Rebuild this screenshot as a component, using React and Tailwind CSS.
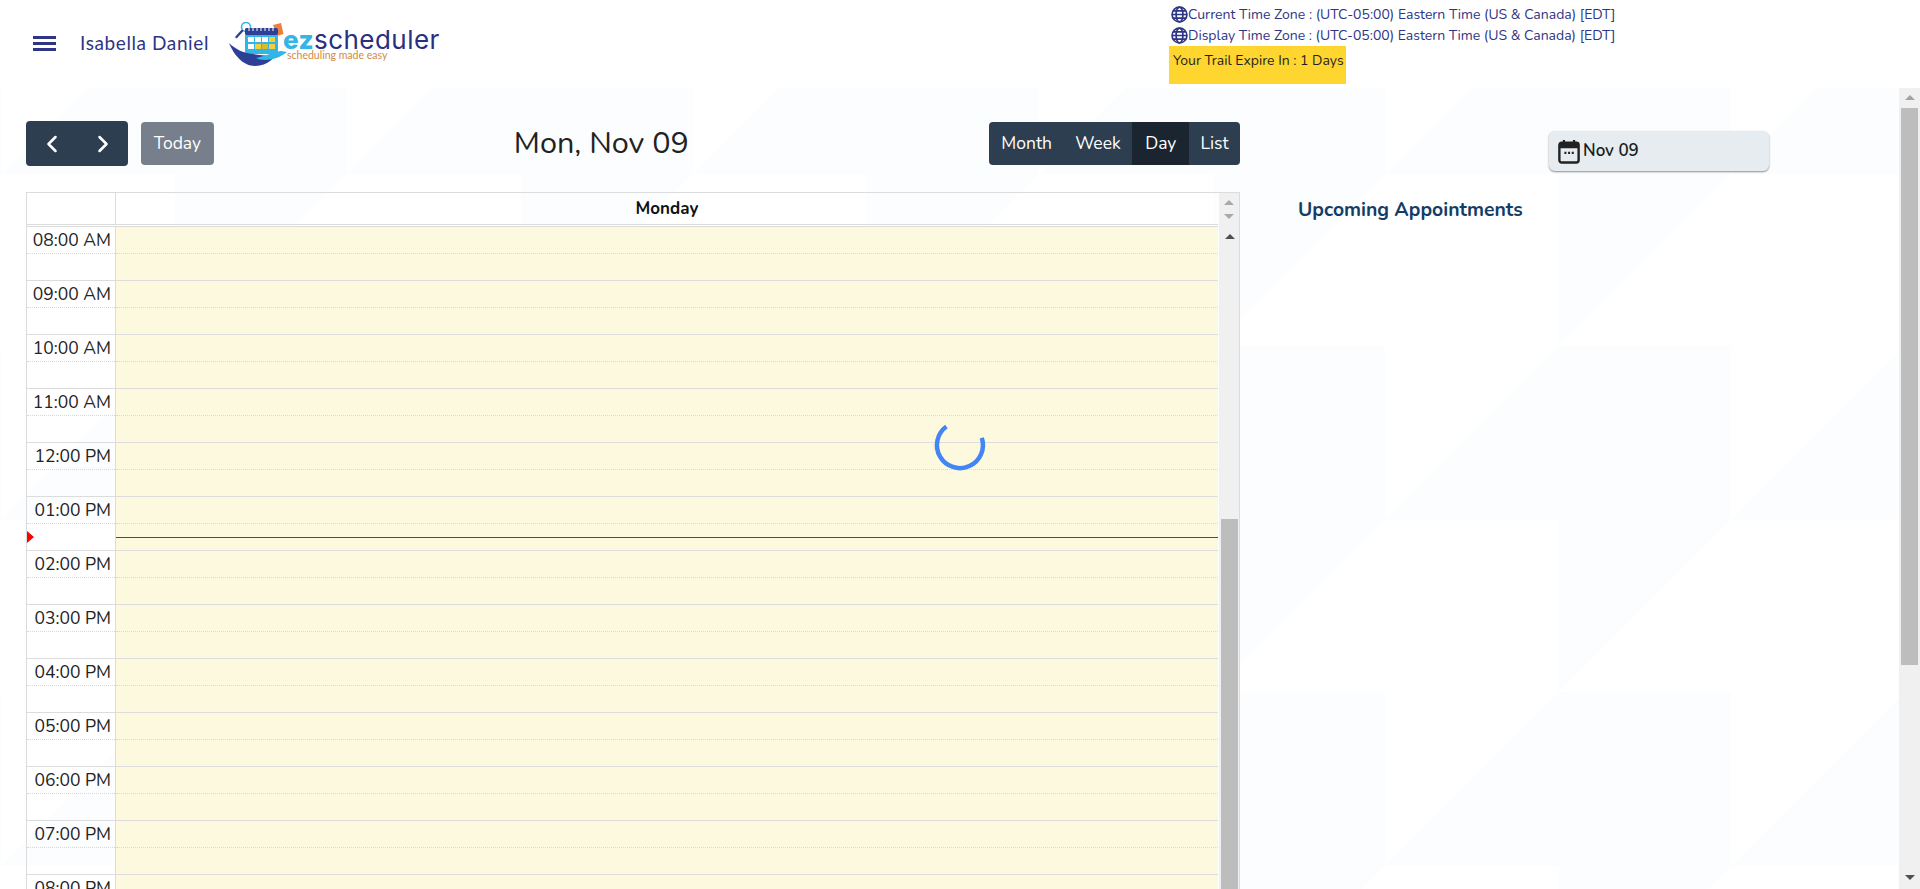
import React from "react";
import { ChevronLeft, ChevronRight } from "lucide-react";

const hours = ["08:00 AM","09:00 AM","10:00 AM","11:00 AM","12:00 PM","01:00 PM","02:00 PM","03:00 PM","04:00 PM","05:00 PM","06:00 PM","07:00 PM","08:00 PM"];
const font = "font-['Nunito','Lato','Noto_Sans',sans-serif]";

function Globe() {
  return (
    <svg width="17" height="17" viewBox="0 0 24 24" fill="none" stroke="#2e3585" strokeWidth="2.4" className="shrink-0 ml-[2px] -mt-[1px]">
      <circle cx="12" cy="12" r="10.5" />
      <ellipse cx="12" cy="12" rx="4.8" ry="10.5" />
      <path d="M1.5 12h21M3 6.8h18M3 17.2h18" />
    </svg>
  );
}

function Logo() {
  return (
    <div className="relative w-[212px] h-[44px] ml-[20px] mt-[22px] shrink-0">
      <svg width="60" height="44" viewBox="0 0 60 44" className="absolute left-0 top-0">
        <circle cx="17" cy="5" r="4.5" fill="#fff" stroke="#35b6e6" strokeWidth="1.6" />
        <path d="M13 9 L7.500 15" stroke="#2e3f96" strokeWidth="2.400" strokeLinecap="round" />
        <path d="M44 3 L52 1 L54.500 12 L48 14Z" fill="#ef7d3c" />
        <rect x="16" y="6" width="33" height="26" rx="2" fill="#33b5e5" />
        <rect x="16" y="6" width="33" height="7" rx="2" fill="#2e3f96" />
        <path d="M20 5v4M24 5v4M28 5v4M32 5v4M36 5v4M40 5v4M44 5v4" stroke="#fff" strokeWidth="1" />
        <rect x="19" y="15" width="6" height="5" fill="#fff" />
        <rect x="26" y="15" width="6" height="5" fill="#fff" />
        <rect x="33" y="15" width="6" height="5" fill="#fff" />
        <rect x="40" y="15" width="6" height="5" fill="#f2cf3c" />
        <rect x="19" y="22" width="6" height="5" fill="#fff" />
        <rect x="26" y="22" width="6" height="5" fill="#f2cf3c" />
        <rect x="33" y="22" width="6" height="5" fill="#d9b92e" />
        <rect x="40" y="22" width="6" height="5" fill="#f2cf3c" />
        <path d="M0 21 C6 27 14 31 24 32 C32 33 38 34 46 34 C42 40 34 44 26 44 C14 44 5 33 0 21Z" fill="#2e3f96" />
        <path d="M27 36 C36 34 44 30 52 29 L58 30 C52 35 44 38 36 38 C32 38 29 37 27 36Z" fill="#33b5e5" />
      </svg>
      <div className="absolute left-[54px] top-[7px] font-['Inter',sans-serif] text-[26px] leading-[22px] tracking-[0.45px] text-[#2a2f7f] whitespace-nowrap">
        <span className="font-extrabold text-[#33b5e5]">ez</span>scheduler
      </div>
      <div className="absolute left-[58px] top-[30px] font-['Lato',sans-serif] text-[10.5px] leading-[7px] text-[#d08a44] whitespace-nowrap">
        scheduling made easy
      </div>
    </div>
  );
}

function Header() {
  return (
    <header className="h-[88px] bg-white flex items-start relative">
      <div className="flex flex-col gap-[3px] ml-[33px] mt-[36px] w-[23px]">
        <span className="h-[3px] bg-[#2e3585]" />
        <span className="h-[3px] bg-[#2e3585]" />
        <span className="h-[3px] bg-[#2e3585]" />
      </div>
      <div className="ml-[24px] mt-[30px] w-[129px] text-[19px] leading-[26px] tracking-[0.6px] text-[#2e3585] font-['Lato',sans-serif] whitespace-nowrap">Isabella Daniel</div>
      <Logo />
      <div className={`ml-[728px] mt-[4px] text-[14px] text-[#2e3585] ${font}`}>
        <div className="flex items-center h-[21px] whitespace-nowrap"><Globe /><span>Current Time Zone : (UTC-05:00) Eastern Time (US &amp; Canada) [EDT]</span></div>
        <div className="flex items-center h-[21px] whitespace-nowrap"><Globe /><span>Display Time Zone : (UTC-05:00) Eastern Time (US &amp; Canada) [EDT]</span></div>
        <div className="w-[177px] h-[38px] bg-[#ffd530] text-[#1f1f1f] pl-[4px] pt-[4px] whitespace-nowrap">Your Trail Expire In : 1 Days</div>
      </div>
    </header>
  );
}

function Toolbar() {
  return (
    <div className={`flex items-center h-[45px] mt-[33px] ${font}`}>
      <div className="flex items-center w-[102px] h-[45px] rounded-[4px] bg-[#2c3e50] text-white">
        <span className="w-[51px] flex justify-center"><ChevronLeft size={28} strokeWidth={2.2} /></span>
        <span className="w-[51px] flex justify-center"><ChevronRight size={28} strokeWidth={2.2} /></span>
      </div>
      <div className="ml-[13px] w-[73px] h-[43px] rounded-[4px] bg-[#767f8b] text-white flex items-center justify-center text-[17.5px]">Today</div>
      <h2 className="ml-[300px] -mt-[2px] w-[175px] text-center text-[30.6px] leading-[42px] text-[#222] whitespace-nowrap">Mon, Nov 09</h2>
      <div className="ml-[300px] flex h-[43px] w-[252px] rounded-[4px] bg-[#2c3e50] text-white text-[17.5px] overflow-hidden">
        <span className="w-[75px] flex items-center justify-center pl-px">Month</span>
        <span className="w-[69px] flex items-center justify-center">Week</span>
        <span className="w-[57px] flex items-center justify-center bg-[#1a252f]">Day</span>
        <span className="w-[51px] flex items-center justify-center">List</span>
      </div>
    </div>
  );
}

function Calendar() {
  return (
    <div className={`mt-[26px] w-[1214px] h-[697px] overflow-hidden border-x border-t border-[#dcdcdc] flex flex-col ${font}`}>
      <div className="flex h-[31px] shrink-0">
        <div className="w-[89px] border-r border-[#dcdcdc]" />
        <div className="w-[1102px] flex items-center justify-center text-[17px] font-bold text-[#111]">Monday</div>
        <div className="ml-px flex-1 bg-[#f0f0f0] flex flex-col items-center pt-[7px] gap-[9px]">
          <span className="w-0 h-0 border-x-[5px] border-x-transparent border-b-[5px] border-b-[#a9a9a9]" />
          <span className="w-0 h-0 border-x-[5px] border-x-transparent border-t-[5px] border-t-[#a9a9a9]" />
        </div>
      </div>
      <div className="flex flex-1 min-h-0">
        <div className="w-[1191px] shrink-0 border-t border-[#dcdcdc] pt-px">
          <div className="border-t border-[#dcdcdc]">
            <div className="relative">
              {hours.map((h) => (
                <div key={h} className="flex h-[54px] border-b border-[#dcdcdc]">
                  <div className="w-[89px] shrink-0 border-r border-[#dcdcdc]">
                    <div className="h-[26px] text-right pr-[4px] text-[17.5px] leading-[26px] text-[#222] whitespace-nowrap">{h}</div>
                    <div className="border-t border-dotted border-[#d8d8d8]" />
                  </div>
                  <div className="flex-1 bg-[#fdf7d6]/80">
                    <div className="h-[26px]" />
                    <div className="border-t border-dotted border-[#d8d8d8]" />
                  </div>
                </div>
              ))}
              <div className="absolute left-[89px] right-0 top-[310px] h-px bg-[#f00]" />
              <div className="absolute left-0 top-[304px] w-0 h-0 border-y-[6.5px] border-y-transparent border-l-[7px] border-l-[#ff0000]" />
            </div>
          </div>
        </div>
        <div className="ml-px flex-1 bg-[#f0f0f0] flex flex-col pt-[10px]">
          <span className="ml-[6px] w-0 h-0 border-x-[5px] border-x-transparent border-b-[5px] border-b-[#505050]" />
          <div className="mt-[280px] ml-[2px] mr-px flex-1 bg-[#bdbdbd]" />
        </div>
      </div>
    </div>
  );
}

function Aside() {
  return (
    <aside className={`flex-1 min-w-0 ${font}`}>
      <div className="ml-[309px] mt-[43px] w-[220px] h-[40px] rounded-[6px] bg-[#e6ecef] shadow-[0_1px_2px_rgba(0,0,0,0.45)] flex items-center pl-[9px] gap-[3px] text-[17px] font-semibold text-[#1b1b1b]">
        <svg width="22" height="25" viewBox="0 0 24 27" className="mt-[1px] shrink-0" fill="none">
          <rect x="1.500" y="4" width="21" height="21.500" rx="2.500" stroke="#222" strokeWidth="2.600" />
          <path d="M1.500 5.500a2 2 0 0 1 2-2h17a2 2 0 0 1 2 2V10h-21Z" fill="#222" />
          <path d="M6.500 1v4M17.500 1v4" stroke="#222" strokeWidth="2.400" />
          <path d="M7 15h2.200M11 15h2.200M15 15h2.200" stroke="#222" strokeWidth="2.200" />
        </svg>
        <span className="-mt-[1px]">Nov 09</span>
      </div>
      <div className="ml-[58px] mt-[26px] text-[19.4px] leading-[26px] font-bold text-[#143d66] whitespace-nowrap">Upcoming Appointments</div>
    </aside>
  );
}

function PageScrollbar() {
  return (
    <div className="w-[21px] shrink-0 bg-[#f0f0f0] flex flex-col items-center relative">
      <span className="mt-[7px] w-0 h-0 border-x-[5px] border-x-transparent border-b-[5px] border-b-[#a3a3a3]" />
      <div className="mt-[8px] w-[17px] h-[557px] bg-[#bdbdbd]" />
      <span className="mt-auto mb-[9px] w-0 h-0 border-x-[5px] border-x-transparent border-t-[5px] border-t-[#505050]" />
    </div>
  );
}

function Pattern() {
  return (
    <svg className="absolute left-0 top-0" width="1920" height="889" viewBox="0 0 1920 889">
      <defs>
        <pattern id="bg-tile" x="1" y="0" width="346" height="346" patternUnits="userSpaceOnUse">
          <path d="M0 174 L174 0 H346 V174 L174 346 V174 Z" fill="#fcfdfe" />
        </pattern>
      </defs>
      <rect width="1920" height="889" fill="url(#bg-tile)" />
    </svg>
  );
}

function Spinner() {
  return (
    <svg className="absolute left-[932px] top-[417px]" width="56" height="56" viewBox="0 0 56 56" fill="none">
      <path d="M14.400 9.500 A 23 23 0 1 0 49.800 20.900" stroke="#4285f4" strokeWidth="4.500" />
    </svg>
  );
}

export default function App() {
  return (
    <div className="relative w-[1920px] h-[889px] overflow-hidden bg-white">
      <Pattern />
      <Header />
      <div className="relative flex h-[801px]">
        <main className="w-[1240px] pl-[26px] shrink-0">
          <Toolbar />
          <Calendar />
        </main>
        <Aside />
        <PageScrollbar />
      </div>
      <Spinner />
    </div>
  );
}
